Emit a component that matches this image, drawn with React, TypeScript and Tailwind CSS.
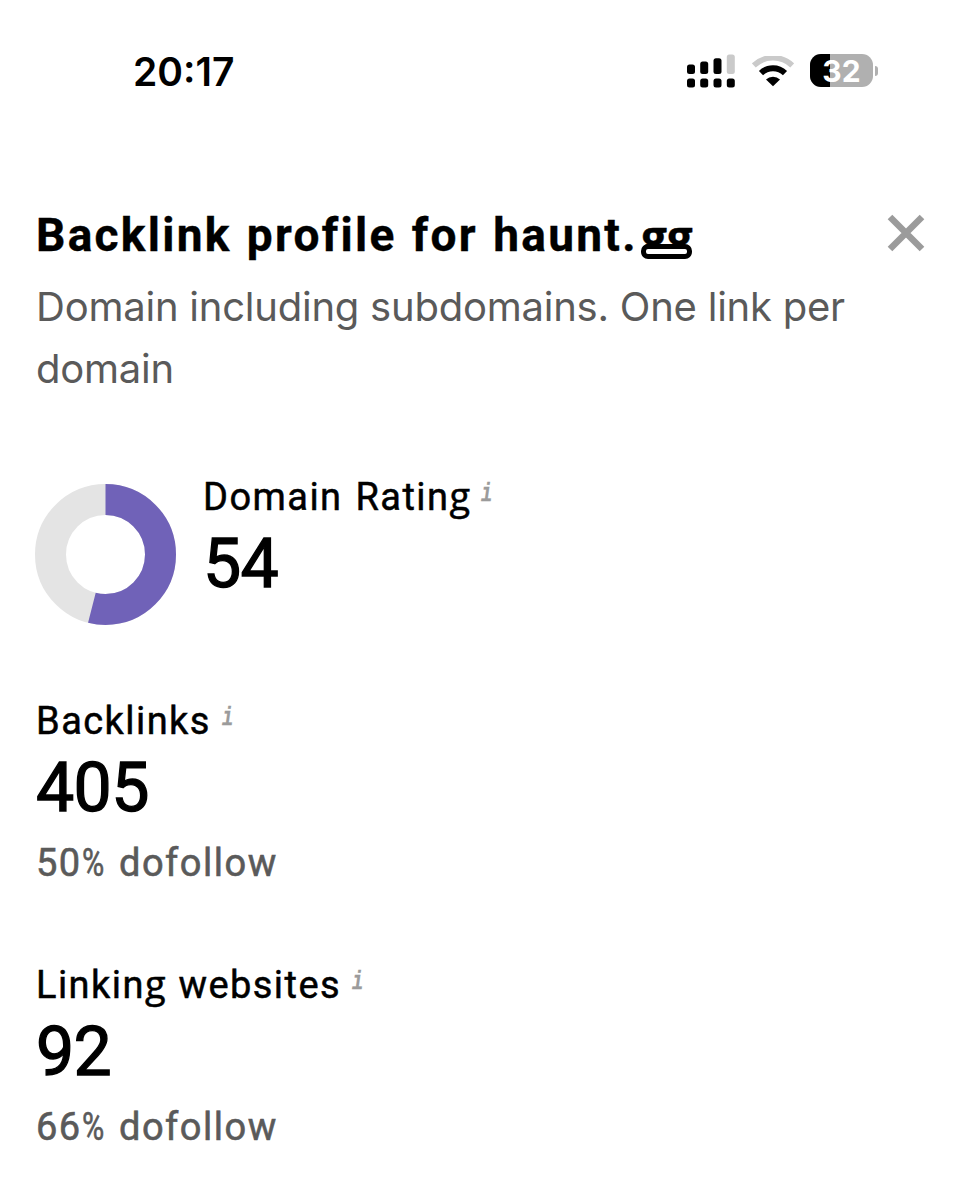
import React from "react";

const CELL_BARS = [
    { x: 0, y: 12.5, h: 9.5, color: "#000" },
    { x: 13.2, y: 9.5, h: 12.5, color: "#000" },
    { x: 26.5, y: 6.3, h: 15.7, color: "#000" },
    { x: 39.8, y: 2.5, h: 19.5, color: "#cacaca" },
];

function CellularIcon() {
    return (
        <svg width="50" height="40" viewBox="0 0 50 40">
            {CELL_BARS.map((bar) => (
                <g key={bar.x}>
                    <rect x={bar.x} y={bar.y} width="8" height={bar.h} rx="2.5" fill={bar.color} />
                    <rect x={bar.x} y="26.5" width="8" height="9" rx="2.5" fill="#000" />
                </g>
            ))}
        </svg>
    );
}

function WifiIcon() {
    return (
        <svg width="42" height="32" viewBox="0 0 42 32">
            <path d="M1.8 9.4a28 28 0 0 1 38.4 0" fill="none" stroke="#cacaca" strokeWidth="5.6" />
            <path d="M9 17.1a17.5 17.5 0 0 1 24 0" fill="none" stroke="#000" strokeWidth="6" />
            <path d="M14 23.6a10 10 0 0 1 14 0L21 30.2Z" fill="#000" />
        </svg>
    );
}

function Battery({ level }: { level: number }) {
    return (
        <div className="-mt-[2px] flex items-center">
            <div className="relative w-[63px] h-[33px] rounded-[11px] bg-[#b0b0b0]">
                <div className="h-full rounded-l-[11px] bg-black" style={{ width: `${level}%` }}></div>
                <span className="absolute inset-0 text-center font-['Inter',sans-serif] font-bold text-[30px] leading-[34px] text-white">
                    {level}
                </span>
            </div>
            <div className="ml-[2px] h-[10px] w-[3px] rounded-r-full bg-[#b0b0b0]"></div>
        </div>
    );
}

function StatusBar() {
    return (
        <div className="h-[143px] pl-[133px] pr-[90px] flex items-center justify-between">
            <span className="font-['Inter',sans-serif] font-semibold text-[39px] leading-[48px]">20:17</span>
            <div className="flex items-center">
                <CellularIcon />
                <div className="ml-[15px]">
                    <WifiIcon />
                </div>
                <div className="ml-[16px]">
                    <Battery level={32} />
                </div>
            </div>
        </div>
    );
}

// double-storey g, Roboto only has the single-storey one
function G() {
    return <span className="font-['Open_Sans',sans-serif] leading-none tracking-normal">g</span>;
}

// the two letters share one flat loop under the baseline
function DoubleG() {
    return (
        <span className="relative inline-block h-[60px] align-top ml-[3px] font-['Open_Sans',sans-serif] leading-[60px] tracking-normal">
            <span className="inline-block [clip-path:inset(0_0_17px_0)]">gg</span>
            <span className="absolute left-0 top-[38px] w-[51px] h-[15px] rounded-[7px] border-[5px] border-black"></span>
        </span>
    );
}

function Percent() {
    return <span className="inline-block origin-left scale-x-80 -mr-[7px]">%</span>;
}

function Info() {
    return (
        <span className="ml-[11px] h-[38px] pt-[4px] origin-left scale-x-75 font-['Liberation_Mono',monospace] font-bold italic text-[25px] leading-[38px] text-[#9b9b9b] w-[16px] [-webkit-text-stroke:0.3px_#9b9b9b]">
            i
        </span>
    );
}

function Metric({ label, value, dofollow }: { label: React.ReactNode; value: number; dofollow?: number }) {
    return (
        <div>
            <div className="flex h-[50px] text-[38px] leading-[50px] tracking-[1.45px] [word-spacing:2px] whitespace-nowrap [-webkit-text-stroke:0.5px_black]">
                <span>{label}</span>
                <Info />
            </div>
            <div className="h-[82px] text-[68px] leading-[84px] tracking-[-0.6px] [-webkit-text-stroke:1.3px_black]">
                {value}
            </div>
            {dofollow !== undefined && (
                <div className="h-[68px] text-[38px] leading-[70px] tracking-[1.5px] [word-spacing:4px] text-[#5a5a5a] [-webkit-text-stroke:0.6px_#5a5a5a]">
                    {dofollow}<Percent /> dofollow
                </div>
            )}
        </div>
    );
}

function Donut({ percent }: { percent: number }) {
    return (
        <svg width="141" height="141" viewBox="0 0 141 141">
            <circle cx="70.5" cy="70.5" r="55" fill="none" stroke="#e4e4e4" strokeWidth="31" />
            <circle
                cx="70.5"
                cy="70.5"
                r="55"
                fill="none"
                stroke="#7062b8"
                strokeWidth="31"
                pathLength="100"
                strokeDasharray={`${percent} 100`}
                transform="rotate(-90 70.5 70.5)"
            />
        </svg>
    );
}

export default function App() {
    return (
        <div className="w-[968px] h-[1200px] overflow-hidden bg-white text-black font-['Roboto',sans-serif]">
            <StatusBar />
            <div className="mt-[63px] pl-9 pr-[43px]">
                <div className="flex h-[60px] justify-between">
                    <h1 className="font-bold text-[46px] leading-[59px] tracking-[2.3px] [word-spacing:1.5px] whitespace-nowrap [-webkit-text-stroke:0.4px_black]">
                        Backlink profile for haunt.<DoubleG />
                    </h1>
                    <button className="mt-[8px] h-[38px]" aria-label="Close">
                        <svg width="38" height="38" viewBox="0 0 38 38">
                            <path d="M3 3L35 35M35 3L3 35" stroke="#9b9b9b" strokeWidth="6.5" />
                        </svg>
                    </button>
                </div>
                <p className="mt-[10px] font-['Inter',sans-serif] text-[40px] leading-[62px] tracking-[-0.23px] text-[#5a5a5a] whitespace-nowrap">
                    Domain including subdomains. One link per
                    <br />
                    domain
                </p>

                <div className="mt-[72px] flex gap-[27px]">
                    <div className="mt-[12px] -ml-px h-[141px]">
                        <Donut percent={54} />
                    </div>
                    <Metric label={<>Domain Ratin<G /></>} value={54} />
                </div>
                <div className="mt-[71px] flex flex-col gap-16">
                    <Metric label="Backlinks" value={405} dofollow={50} />
                    <Metric label={<>Linkin<G /> websites</>} value={92} dofollow={66} />
                </div>
            </div>
        </div>
    );
}
